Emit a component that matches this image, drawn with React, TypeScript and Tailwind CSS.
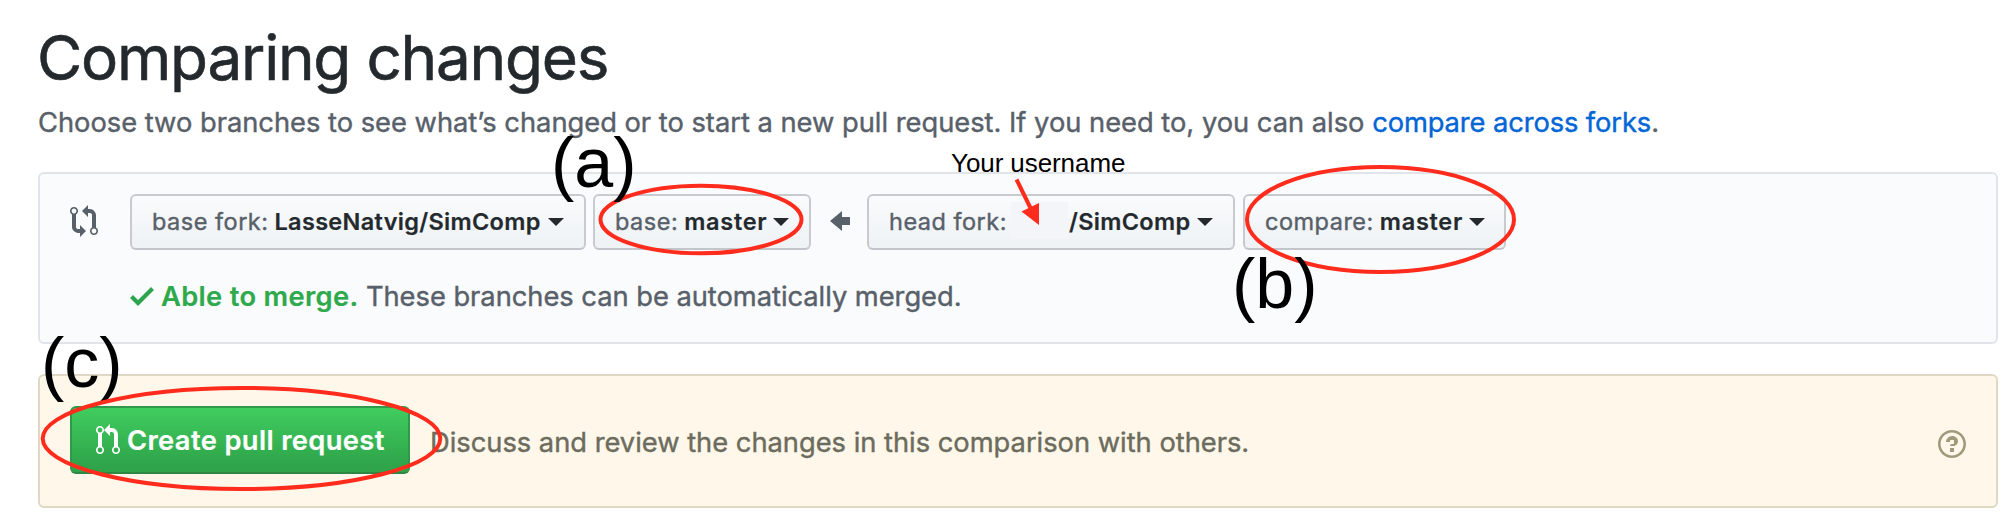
import type { ReactNode } from 'react';

function CompareIcon() {
  return (
    <svg width="28" height="32" viewBox="0 0 14 16" fill="currentColor">
      <path fillRule="evenodd" d="M5 12H4c-.27-.02-.48-.11-.69-.31-.21-.2-.3-.42-.31-.69V4.72A1.993 1.993 0 0 0 2 1a1.993 1.993 0 0 0-1 3.72V11c.03.78.34 1.47.94 2.06.6.59 1.28.91 2.06.94h1v2l3-3-3-3v2zM2 1.8c.66 0 1.2.55 1.2 1.2 0 .65-.55 1.2-1.2 1.2C1.35 4.2.8 3.65.8 3c0-.65.55-1.2 1.2-1.2zm11 9.48V5c-.03-.78-.34-1.47-.94-2.06-.6-.59-1.28-.91-2.06-.94H9V0L6 3l3 3V4h1c.27.02.48.11.69.31.21.2.3.42.31.69v6.28A1.993 1.993 0 0 0 12 15a1.993 1.993 0 0 0 1-3.72zm-1 2.92c-.66 0-1.2-.55-1.2-1.2 0-.65.55-1.2 1.2-1.2.65 0 1.2.55 1.2 1.2 0 .65-.55 1.2-1.2 1.2z" />
    </svg>
  );
}

function PullRequestIcon() {
  return (
    <svg width="24" height="32" viewBox="0 0 12 16" fill="currentColor">
      <path fillRule="evenodd" d="M11 11.28V5c-.03-.78-.34-1.47-.94-2.06C9.46 2.35 8.78 2.03 8 2H7V0L4 3l3 3V4h1c.27.02.48.11.69.31.21.2.3.42.31.69v6.28A1.993 1.993 0 0 0 10 15a1.993 1.993 0 0 0 1-3.72zm-1 2.92c-.66 0-1.2-.55-1.2-1.2 0-.65.55-1.2 1.2-1.2.65 0 1.2.55 1.2 1.2 0 .65-.55 1.2-1.2 1.2zM4 3c0-1.11-.89-2-2-2a1.993 1.993 0 0 0-1 3.72v6.56A1.993 1.993 0 0 0 2 15a1.993 1.993 0 0 0 1-3.72V4.72c.59-.34 1-.98 1-1.72zm-.8 10c0 .66-.55 1.2-1.2 1.2-.65 0-1.2-.55-1.2-1.2 0-.65.55-1.2 1.2-1.2.65 0 1.2.55 1.2 1.2zM2 4.2C1.34 4.2.8 3.65.8 3c0-.65.55-1.2 1.2-1.2.65 0 1.2.55 1.2 1.2 0 .65-.55 1.2-1.2 1.2z" />
    </svg>
  );
}

function ArrowLeftIcon() {
  return (
    <svg width="20" height="32" viewBox="0 0 10 16" fill="currentColor">
      <path d="M6 3L0 8l6 5v-3h4V6H6z" />
    </svg>
  );
}

function CheckIcon() {
  return (
    <svg width="24" height="32" viewBox="0 0 12 16" fill="currentColor">
      <path d="M12 5l-8 8-4-4 1.5-1.5L4 10l6.5-6.5z" />
    </svg>
  );
}

function QuestionIcon() {
  return (
    <svg width="28" height="32" viewBox="0 0 14 16" fill="currentColor">
      <path fillRule="evenodd" d="M6 10h2v2H6v-2zm4-3.5C10 8.64 8 9 8 9H6c0-.55.45-1 1-1h.5c.28 0 .5-.22.5-.5v-1c0-.28-.22-.5-.5-.5h-1c-.28 0-.5.22-.5.5V7H4c0-1.5 1.5-3 3-3s3 1 3 2.5zM7 2.3c3.14 0 5.7 2.56 5.7 5.7s-2.56 5.7-5.7 5.7A5.71 5.71 0 0 1 1.3 8c0-3.14 2.56-5.7 5.7-5.7zM7 1C3.14 1 0 4.14 0 8s3.14 7 7 7 7-3.14 7-7-3.14-7-7-7z" />
    </svg>
  );
}

function Select({ label, width, children }: { label: string; width: string; children: ReactNode }) {
  return (
    <button
      className={`flex h-14 shrink-0 items-center whitespace-nowrap rounded-[6px] border-2 border-[#c8cbce] border-b-[#c2c5ca] bg-linear-to-b from-[#fafbfc] to-[#eff3f6] to-90% pl-5 text-[23.5px] leading-[52px] ${width}`}
    >
      <span className="text-[#586069] tracking-[0.5px] [-webkit-text-stroke:0.4px]">{label}</span>
      {children}
      <svg width="16" height="8" viewBox="0 0 16 8" fill="#24292e">
        <path d="M0 0h16L8 8z" />
      </svg>
    </button>
  );
}

function Note({ place, children }: { place: string; children: string }) {
  return (
    <span className={`absolute whitespace-nowrap font-['Liberation_Sans',Arial,sans-serif] text-black ${place}`}>
      {children}
    </span>
  );
}

export default function App() {
  return (
    <div className="relative h-[526px] w-[2012px] overflow-hidden bg-white pl-[38px] pr-[14px] pt-[26px] font-[Inter,sans-serif] text-[#586069]">
      <h1 className="-ml-px h-16 whitespace-nowrap text-[62px] font-normal leading-[64px] tracking-[-1.22px] text-[#24292e] [-webkit-text-stroke:0.6px]">
        Comparing changes
      </h1>
      <p className="mt-[13px] h-10 whitespace-nowrap text-[27.3px] leading-10 tracking-[-0.01px] [-webkit-text-stroke:0.4px]">
        Choose two branches to see what’s changed or to start a new pull request. If you need to, you can also{' '}
        <a className="tracking-[-0.1px] text-[#0366d6]">compare across forks</a>.
      </p>

      <section className="mt-[29px] h-[172px] rounded-[6px] border-2 border-[#e1e4e8] bg-[#fafbfd] pl-[30px] pt-5">
        <div className="flex h-14 items-center">
          <span className="mr-8 w-7 -translate-y-px">
            <CompareIcon />
          </span>
          <Select label="base fork:" width="w-[456px]">
            <span className="ml-[6px] mr-[7px] font-semibold tracking-[0.31px] text-[#24292e] [-webkit-text-stroke:0.2px]">LasseNatvig/SimComp</span>
          </Select>
          <span className="w-[7px] shrink-0" />
          <Select label="base:" width="w-[218px]">
            <span className="ml-[6px] mr-[6px] font-semibold tracking-[0.72px] text-[#24292e] [-webkit-text-stroke:0.2px]">master</span>
          </Select>
          <span className="ml-[19px] mr-[17px] w-5 shrink-0 -translate-y-px">
            <ArrowLeftIcon />
          </span>
          <Select label="head fork:" width="w-[368px]">
            <span className="ml-[4px] h-[37px] w-[57px] -translate-y-0.5 bg-[#f3f5f8]" />
            <span className="ml-[1px] mr-[7px] font-semibold tracking-[0.3px] text-[#24292e] [-webkit-text-stroke:0.2px]">/SimComp</span>
          </Select>
          <span className="w-[8px] shrink-0" />
          <Select label="compare:" width="w-[263px]">
            <span className="ml-[6px] mr-[6px] font-semibold tracking-[0.72px] text-[#24292e] [-webkit-text-stroke:0.2px]">master</span>
          </Select>
        </div>
        <div className="mt-[27px] flex h-10 items-center whitespace-nowrap pl-[60px] text-[27.3px] leading-10">
          <span className="mr-[7px] -translate-y-px text-[#2ea44f]">
            <CheckIcon />
          </span>
          <span className="font-semibold tracking-[0.33px] text-[#2ea94b] [-webkit-text-stroke:0.2px]">Able to merge.</span>
          <span className="ml-[7.5px] tracking-[-0.03px] [-webkit-text-stroke:0.4px]">These branches can be automatically merged.</span>
        </div>
      </section>

      <section className="mt-[30px] flex h-[134px] items-start rounded-[6px] border-2 border-[#dfd8c2] bg-[#fff8ea] pl-[30px] pr-[30px] pt-[30px]">
        <button className="flex h-[68px] w-[340px] items-center whitespace-nowrap rounded-[6px] border-2 border-[#30994b] border-b-[#2c8842] bg-linear-to-b from-[#40cd5f] to-[#2fa44a] to-90% pl-6 text-[27.3px] font-semibold leading-[64px] tracking-[0.37px] text-white">
          <span className="mr-[7px]">
            <PullRequestIcon />
          </span>
          <span className="translate-y-px [-webkit-text-stroke:0.2px]">Create pull request</span>
        </button>
        <p className="ml-5 mt-[17px] h-10 whitespace-nowrap text-[27.3px] leading-10 tracking-[-0.01px] text-[#6c6c5e] [-webkit-text-stroke:0.4px]">
          Discuss and review the changes in this comparison with others.
        </p>
        <span className="ml-auto mt-[22px] text-[#a09a7c]">
          <QuestionIcon />
        </span>
      </section>

      <Note place="left-[41px] top-[328px] text-[70px] leading-[70px]">(c)</Note>
      <svg className="absolute left-0 top-0" width="2012" height="526" viewBox="0 0 2012 526">
        <g fill="none" stroke="#ff2b1c" strokeWidth="4">
          <ellipse cx="701" cy="219.5" rx="100.5" ry="33.8" />
          <ellipse cx="1380.5" cy="219.5" rx="133.5" ry="52.5" />
          <ellipse cx="241.5" cy="438.5" rx="198.8" ry="50.5" />
          <path d="M1016.5 179.5L1031 209" />
        </g>
        <path d="M1021.5 211.5L1039 203v22z" fill="#ff2b1c" />
      </svg>
      <Note place="left-[551px] top-[128px] text-[70px] leading-[70px]">(a)</Note>
      <Note place="left-[1232px] top-[249px] text-[70px] leading-[70px]">(b)</Note>
      <Note place="left-[951px] top-[148px] text-[26px] leading-[30px] tracking-[-0.08px]">Your username</Note>
    </div>
  );
}
